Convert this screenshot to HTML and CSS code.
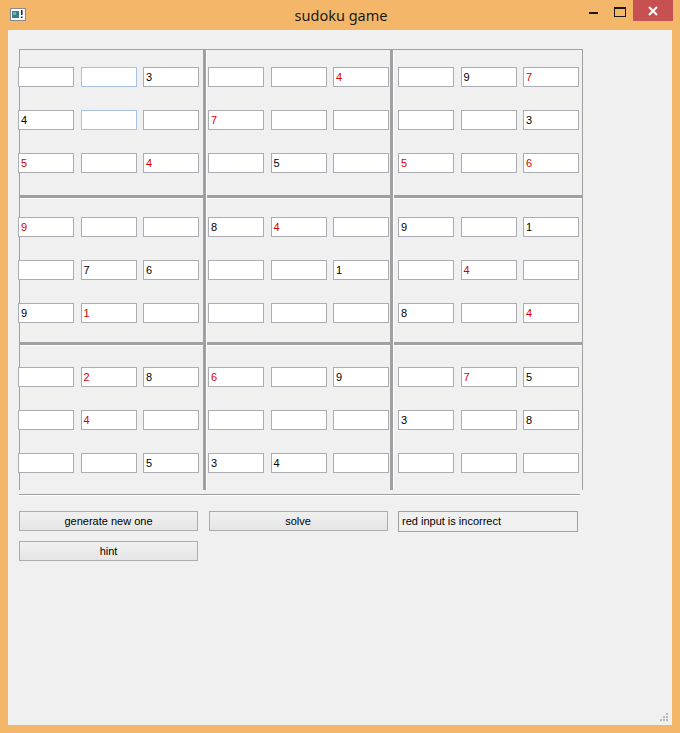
FILE: index.html
```html
<!DOCTYPE html>
<html>
<head>
<meta charset="utf-8">
<title>sudoku game</title>
<link rel="stylesheet" href="styles.css">
</head>
<body>
<div class="window">
  <div class="titlebar">
    <div class="tb-left">
      <svg class="app-icon" width="16" height="13" viewBox="0 0 16 13">
        <rect x="0.5" y="0.5" width="15" height="12" fill="#fafafa" stroke="#8a8a8a"/>
        <rect x="2" y="3" width="7" height="7" fill="#3c7f86"/>
        <rect x="3" y="4" width="3" height="3" fill="#6fb0a8"/>
        <rect x="11" y="2" width="1.5" height="5" fill="#222"/>
        <rect x="11" y="8.5" width="1.5" height="1.5" fill="#222"/>
      </svg>
    </div>
    <div class="title">sudoku game</div>
    <div class="tb-right">
      <div class="btn-min"><span></span></div>
      <div class="btn-max"><span></span></div>
      <div class="btn-close">
        <svg width="10" height="10" viewBox="0 0 10 10"><path d="M1 1 L9 9 M9 1 L1 9" stroke="#fff" stroke-width="2"/></svg>
      </div>
    </div>
  </div>
  <div class="client">
    <div class="board">
      <div class="col col1">
        <div class="box band1">
          <div class="cell"></div><div class="cell focus"></div><div class="cell">3</div>
          <div class="cell">4</div><div class="cell focus"></div><div class="cell"></div>
          <div class="cell red">5</div><div class="cell"></div><div class="cell red">4</div>
        </div>
        <div class="hsep"></div>
        <div class="box band2">
          <div class="cell red">9</div><div class="cell"></div><div class="cell"></div>
          <div class="cell"></div><div class="cell">7</div><div class="cell">6</div>
          <div class="cell">9</div><div class="cell red">1</div><div class="cell"></div>
        </div>
        <div class="hsep"></div>
        <div class="box band3">
          <div class="cell"></div><div class="cell red">2</div><div class="cell">8</div>
          <div class="cell"></div><div class="cell red">4</div><div class="cell"></div>
          <div class="cell"></div><div class="cell"></div><div class="cell">5</div>
        </div>
      </div>
      <div class="vsep"></div>
      <div class="col col2">
        <div class="box band1">
          <div class="cell"></div><div class="cell"></div><div class="cell red">4</div>
          <div class="cell red">7</div><div class="cell"></div><div class="cell"></div>
          <div class="cell"></div><div class="cell">5</div><div class="cell"></div>
        </div>
        <div class="hsep"></div>
        <div class="box band2">
          <div class="cell">8</div><div class="cell red">4</div><div class="cell"></div>
          <div class="cell"></div><div class="cell"></div><div class="cell">1</div>
          <div class="cell"></div><div class="cell"></div><div class="cell"></div>
        </div>
        <div class="hsep"></div>
        <div class="box band3">
          <div class="cell red">6</div><div class="cell"></div><div class="cell">9</div>
          <div class="cell"></div><div class="cell"></div><div class="cell"></div>
          <div class="cell">3</div><div class="cell">4</div><div class="cell"></div>
        </div>
      </div>
      <div class="vsep"></div>
      <div class="col col3">
        <div class="box band1">
          <div class="cell"></div><div class="cell">9</div><div class="cell red">7</div>
          <div class="cell"></div><div class="cell"></div><div class="cell">3</div>
          <div class="cell red">5</div><div class="cell"></div><div class="cell red">6</div>
        </div>
        <div class="hsep"></div>
        <div class="box band2">
          <div class="cell">9</div><div class="cell"></div><div class="cell">1</div>
          <div class="cell"></div><div class="cell red">4</div><div class="cell"></div>
          <div class="cell">8</div><div class="cell"></div><div class="cell red">4</div>
        </div>
        <div class="hsep"></div>
        <div class="box band3">
          <div class="cell"></div><div class="cell red">7</div><div class="cell">5</div>
          <div class="cell">3</div><div class="cell"></div><div class="cell">8</div>
          <div class="cell"></div><div class="cell"></div><div class="cell"></div>
        </div>
      </div>
    </div>
    <div class="hline"></div>
    <div class="actions">
      <div class="button">generate new one</div>
      <div class="button">solve</div>
      <div class="status">red input is incorrect</div>
      <div class="button">hint</div>
    </div>
    <svg class="grip" width="9" height="9" viewBox="0 0 9 9">
      <rect x="6" y="0" width="2" height="2" fill="#b8b8b8"/>
      <rect x="3" y="3" width="2" height="2" fill="#b8b8b8"/>
      <rect x="6" y="3" width="2" height="2" fill="#b8b8b8"/>
      <rect x="0" y="6" width="2" height="2" fill="#b8b8b8"/>
      <rect x="3" y="6" width="2" height="2" fill="#b8b8b8"/>
      <rect x="6" y="6" width="2" height="2" fill="#b8b8b8"/>
    </svg>
  </div>
</div>
</body>
</html>
```
FILE: styles.css
```css
html, body {
  margin: 0;
  padding: 0;
}
body {
  width: 680px;
  height: 733px;
  background: #f4b76a;
  overflow: hidden;
  font-family: "Liberation Sans", Arial, sans-serif;
}
.window {
  width: 680px;
  height: 733px;
}
.titlebar {
  height: 30px;
  display: grid;
  grid-template-columns: 1fr auto 1fr;
  align-items: start;
}
.tb-left {
  padding: 8px 0 0 10px;
}
.app-icon {
  display: block;
}
.title {
  font-family: "Noto Sans", "Open Sans", sans-serif;
  font-size: 14.5px;
  color: #1a1a1a;
  line-height: 20px;
  padding-top: 5px;
  padding-left: 2px;
}
.tb-right {
  display: flex;
  justify-content: flex-end;
  height: 21px;
  padding-right: 7px;
}
.btn-min {
  width: 26px;
  height: 21px;
  display: flex;
  align-items: flex-start;
  justify-content: center;
}
.btn-min span {
  display: block;
  width: 9px;
  height: 2px;
  margin-top: 12px;
  background: #1a1a1a;
}
.btn-max {
  width: 27px;
  height: 21px;
  display: flex;
  justify-content: center;
}
.btn-max span {
  display: block;
  width: 10px;
  height: 7px;
  margin-top: 7px;
  border: 1px solid #1a1a1a;
  border-top-width: 2px;
}
.btn-close {
  width: 40px;
  height: 21px;
  background: #c75050;
  display: flex;
  align-items: center;
  justify-content: center;
}
.btn-close svg {
  display: block;
}
.client {
  position: relative;
  margin: 0 8px;
  height: 695px;
  box-sizing: border-box;
  background: #f0f0f0;
  padding: 19px 0 0 11px;
}
.board {
  display: flex;
  width: 564px;
  height: 441px;
  box-sizing: border-box;
  border-left: 1px solid #a0a0a0;
  border-top: 1px solid #a0a0a0;
  border-right: 1px solid #a0a0a0;
}
.col {
  display: flex;
  flex-direction: column;
}
.col1 { width: 183px; }
.col2 { width: 183px; }
.col3 { width: 188px; }
.vsep {
  width: 3px;
  background: #a0a0a0;
  border-right: 1px solid #ffffff;
}
.hsep {
  height: 3px;
  background: #a0a0a0;
  border-bottom: 1px solid #ffffff;
}
.box {
  display: grid;
  grid-template-columns: repeat(3, 56px);
  grid-auto-rows: 20px;
  column-gap: 6.5px;
  row-gap: 23px;
  box-sizing: border-box;
  align-content: start;
}
.col1 .box { margin-left: -2px; }
.col2 .box { margin-left: 1px; }
.col3 .box { margin-left: 4px; }
.band1 { height: 145px; padding-top: 17px; }
.band2 { height: 143px; padding-top: 18px; }
.band3 { height: 144px; padding-top: 21px; }
.cell {
  box-sizing: border-box;
  width: 56px;
  height: 20px;
  background: #ffffff;
  border: 1px solid #abadb3;
  font-size: 11px;
  line-height: 18px;
  padding-left: 2px;
  color: #000;
}
.cell.red {
  color: #d40000;
}
.cell.focus {
  border-color: #a6c1e0;
}
.hline {
  margin-top: 4px;
  width: 561px;
  height: 1px;
  background: #a0a0a0;
  border-bottom: 1px solid #ffffff;
}
.actions {
  margin-top: 15px;
  display: grid;
  grid-template-columns: 179px 179px 180px;
  grid-auto-rows: 20px;
  column-gap: 10.5px;
  row-gap: 10px;
}
.button {
  box-sizing: border-box;
  border: 1px solid #acacac;
  background: linear-gradient(#f0f0f0, #e5e5e5);
  font-size: 11px;
  line-height: 18px;
  text-align: center;
  color: #000;
}
.status {
  box-sizing: border-box;
  height: 21px;
  border: 1px solid #a0a0a0;
  font-size: 11px;
  line-height: 19px;
  padding-left: 3px;
  color: #000;
}
.grip {
  position: absolute;
  right: 3px;
  bottom: 3px;
  display: block;
}
```
